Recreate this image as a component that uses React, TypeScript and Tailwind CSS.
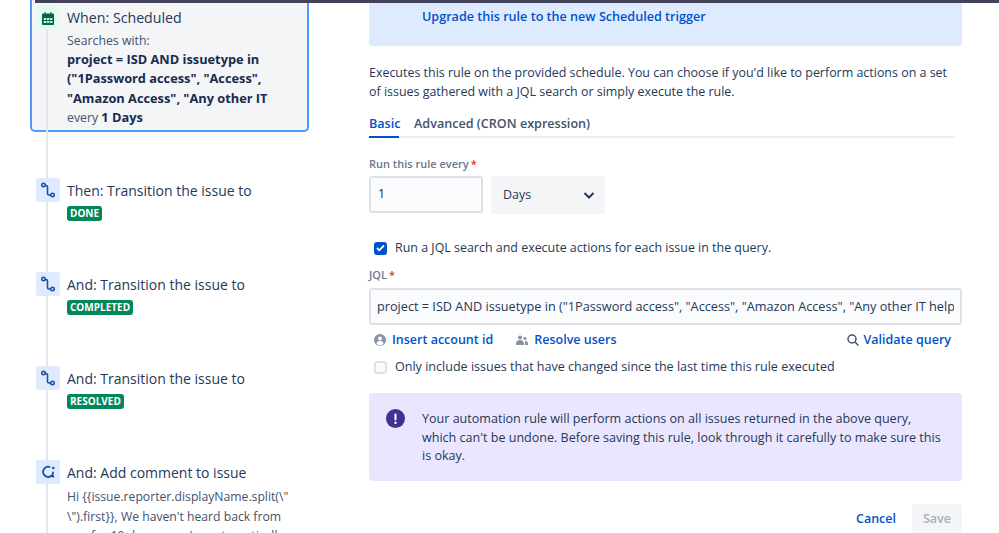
import React from "react";

const font = { fontFamily: '"Open Sans", "Noto Sans", sans-serif' };

function TransitionIcon() {
  return (
    <svg width="14" height="16" viewBox="0 0 14 16" fill="none" stroke="#1d4ea8" strokeWidth="1.6">
      <circle cx="2.500" cy="3" r="1.700" />
      <circle cx="11.500" cy="13" r="1.700" />
      <path d="M4 3.500h1a1.500 1.500 0 0 1 1.500 1.500v6.500a1.500 1.500 0 0 0 1.500 1.500h2" />
    </svg>
  );
}

function CommentIcon() {
  return (
    <svg width="15" height="14" viewBox="0 0 15 14" fill="none" stroke="#1d4ea8" strokeWidth="1.800">
      <path d="M9.300 2.300A5 5 0 1 0 10.300 10.700L12.300 11.800L11.500 9.300A5 5 0 0 0 12 6.800" strokeLinejoin="round" />
      <circle cx="12.300" cy="3" r="1.300" fill="#1d4ea8" stroke="none" />
    </svg>
  );
}

function CalendarIcon() {
  return (
    <svg width="12" height="13" viewBox="0 0 12 13">
      <path d="M2.500 0h1v1.500h5V0h1v1.500H11a1 1 0 0 1 1 1V12a1 1 0 0 1-1 1H1a1 1 0 0 1-1-1V2.500a1 1 0 0 1 1-1h1.500z" fill="#006644" />
      <path d="M1.700 6h2.500v2H1.700zM4.800 6h2.500v2H4.800zM7.900 6h2.500v2H7.900zM1.700 9h2.500v2H1.700zM4.800 9h2.500v2H4.800zM7.900 9h2.500v2H7.900z" fill="#c8ecd9" />
    </svg>
  );
}

function Step({ label, badge, className, children }: { label: string; badge?: string; className: string; children?: React.ReactNode }) {
  return (
    <div className={`flex gap-[7px] ${className}`}>
      <div className="w-6 h-6 rounded-[3px] bg-[#deebff] flex items-center justify-center shrink-0 relative z-20">
        {label.includes("comment") ? <CommentIcon /> : <TransitionIcon />}
      </div>
      <div className="min-w-0 pt-[1px]">
        <div className="text-[14px] leading-[24px] text-[#253858] whitespace-nowrap">{label}</div>
        {badge && (
          <span className="block w-fit mt-[3px] bg-[#00875a] text-white rounded-[3px] px-[3px] text-[10px] font-bold leading-[15px]">
            {badge}
          </span>
        )}
        {children}
      </div>
    </div>
  );
}

export default function App() {
  return (
    <div style={font} className="w-[999px] h-[533px] overflow-hidden bg-white relative">
      <div className="absolute top-0 left-[35px] right-0 h-[3px] bg-[#42425a] z-30" />
      <div className="flex h-full">
        <div className="w-[369px] shrink-0 pl-[30px] relative">
          <div className="absolute left-[46px] top-[24px] bottom-0 w-[2px] bg-[#e4e6ec] z-10" />
          <div className="h-[132px] w-[279px] bg-[#f4f5f7] border-2 border-[#4c9aff] border-t-0 rounded-b-[5px] pl-[4px] pt-[6px] flex gap-[7px]">
            <div className="w-6 h-6 rounded-[3px] bg-[#e3fcef] flex items-center justify-center shrink-0 relative z-20">
              <CalendarIcon />
            </div>
            <div className="text-[12.300px] leading-[19.500px] text-[#42526e] whitespace-nowrap">
              <div className="text-[14.200px] leading-[24px] text-[#253858]">When: Scheduled</div>
              <div className="mt-[1px]">Searches with:</div>
              <div className="text-[12.800px] mt-[-1px] font-bold text-[#172b4d]">project = ISD AND issuetype in</div>
              <div className="text-[12.800px] font-bold text-[#172b4d]">("1Password access", "Access",</div>
              <div className="text-[12.800px] font-bold text-[#172b4d]">"Amazon Access", "Any other IT</div>
              <div>every <b className="text-[12.800px] text-[#172b4d]">1 Days</b></div>
            </div>
          </div>
          <div className="pl-[6px] flex flex-col">
            <Step className="mt-[46px] h-[94px]" label="Then: Transition the issue to" badge="DONE" />
            <Step className="h-[94px]" label="And: Transition the issue to" badge="COMPLETED" />
            <Step className="h-[94px]" label="And: Transition the issue to" badge="RESOLVED" />
            <Step className="h-[94px]" label="And: Add comment to issue">
              <div className="mt-[2px] text-[12.200px] leading-[19.500px] text-[#42526e] whitespace-nowrap">
                <div>Hi {"{{issue.reporter.displayName.split(\\\""}</div>
                <div>{"\\\").first}}, We haven't heard back from"}</div>
                <div>you for 10 days so we're automatically</div>
              </div>
            </Step>
          </div>
        </div>

        <div className="w-[593px] shrink-0 text-[12.450px] text-[#253858]">
          <div className="h-[46px] bg-[#deebff] rounded-b-[3px] pl-[53px] pt-[7px] text-[12.600px] leading-[20px] font-semibold text-[#0052cc]">
            Upgrade this rule to the new Scheduled trigger
          </div>
          <p className="mt-[17px] leading-[19px] whitespace-nowrap">
            Executes this rule on the provided schedule. You can choose if you'd like to perform actions on a set
            <br />
            of issues gathered with a JQL search or simply execute the rule.
          </p>
          <div className="mt-[14px] w-[586px] border-b-2 border-[#ebecf0] flex gap-[15px] h-[23px] text-[12.600px] font-semibold">
            <div className="text-[#0052cc] border-b-2 border-[#0052cc] h-[23px] w-[30px]">Basic</div>
            <div className="text-[#42526e]">Advanced (CRON expression)</div>
          </div>
          <div className="mt-[18px] text-[11px] leading-[16px] font-semibold text-[#6b778c]">
            Run this rule every<span className="text-[#de350b] ml-[2px]">*</span>
          </div>
          <div className="mt-[4px] flex gap-2">
            <div className="w-[114px] h-[37px] border-2 border-[#dfe1e6] bg-[#fafbfc] rounded-[3px] pl-[7px] flex items-center text-[#172b4d]">1</div>
            <div className="w-[114px] h-[38px] bg-[#f4f5f7] rounded-[3px] pl-[12px] pr-[9px] flex items-center justify-between text-[#253858]">
              Days
              <svg width="14" height="14" viewBox="0 0 14 14" fill="none" stroke="#253858" strokeWidth="2"><path d="M2.500 5l4.500 4.500L11.500 5" /></svg>
            </div>
          </div>
          <label className="mt-[24px] ml-[5px] flex items-center gap-[8px] h-[20px]">
            <span className="w-[13px] h-[13px] rounded-[3px] bg-[#0052cc] flex items-center justify-center">
              <svg width="9" height="8" viewBox="0 0 9 8" fill="none" stroke="white" strokeWidth="1.800"><path d="M1 4l2.300 2.300L8 1.500" /></svg>
            </span>
            Run a JQL search and execute actions for each issue in the query.
          </label>
          <div className="mt-[9px] text-[11px] leading-[16px] font-semibold text-[#6b778c]">
            JQL<span className="text-[#de350b] ml-[2px]">*</span>
          </div>
          <div className="mt-[5px] w-[593px] h-[37px] border-2 border-[#dfe1e6] bg-[#fafbfc] rounded-[3px] px-[6px] pt-[1px] flex items-center overflow-hidden whitespace-nowrap text-[12.700px] text-[#253858]">
            <span className="overflow-hidden">project = ISD AND issuetype in ("1Password access", "Access", "Amazon Access", "Any other IT help desk request")</span>
          </div>
          <div className="mt-[5px] h-[20px] flex items-center font-semibold text-[#0052cc] text-[12.500px]">
            <svg className="ml-[5px] mr-[6px]" width="12" height="12" viewBox="0 0 12 12"><circle cx="6" cy="6" r="6" fill="#8993a4" /><circle cx="6" cy="4.500" r="2" fill="white" /><path d="M2.500 10a3.500 3 0 0 1 7 0 5 5 0 0 1-7 0z" fill="white" /></svg>
            Insert account id
            <svg className="ml-[23px] mr-[6px]" width="12" height="11" viewBox="0 0 12 11" fill="#8993a4"><circle cx="4" cy="2.500" r="2" /><circle cx="9" cy="3.500" r="1.600" /><path d="M0 9c0-2.500 1.500-4 4-4s4 1.500 4 4v1H0zM9 6c2 0 3 1 3 2.500V10H9z" /></svg>
            Resolve users
            <svg className="ml-auto mr-[5px]" width="12" height="12" viewBox="0 0 12 12" fill="none" stroke="#42526e" strokeWidth="1.500"><circle cx="5" cy="5" r="4" /><path d="M8 8l3.500 3.500" /></svg>
            <span className="mr-[11px]">Validate query</span>
          </div>
          <label className="mt-[7px] ml-[5px] flex items-center gap-[8px] h-[20px] text-[12.550px]">
            <span className="w-[13px] h-[13px] rounded-[3px] bg-[#fafbfc] border-2 border-[#dfe1e6]" />
            Only include issues that have changed since the last time this rule executed
          </label>
          <div className="mt-[16px] h-[88px] bg-[#eae6ff] rounded-[3px] pl-[17px] pt-[17px] flex gap-[17px]">
            <svg className="mt-[-1px] shrink-0" width="19" height="19" viewBox="0 0 19 19"><circle cx="9.500" cy="9.500" r="9.500" fill="#403294" /><rect x="8.500" y="4.500" width="2" height="7" rx="1" fill="white" /><circle cx="9.500" cy="13.800" r="1.200" fill="white" /></svg>
            <p className="leading-[18.500px] text-[12.550px] text-[#253858] whitespace-nowrap">
              Your automation rule will perform actions on all issues returned in the above query,
              <br />
              which can't be undone. Before saving this rule, look through it carefully to make sure this
              <br />
              is okay.
            </p>
          </div>
          <div className="mt-[23px] flex justify-end items-start gap-[16px]">
            <span className="mt-[6px] font-semibold text-[12.500px] text-[#0052cc]">Cancel</span>
            <span className="w-[50px] h-[30px] rounded-[3px] bg-[#f4f5f7] flex items-center justify-center font-semibold text-[12.500px] text-[#a5adba]">Save</span>
          </div>
        </div>
      </div>
    </div>
  );
}
